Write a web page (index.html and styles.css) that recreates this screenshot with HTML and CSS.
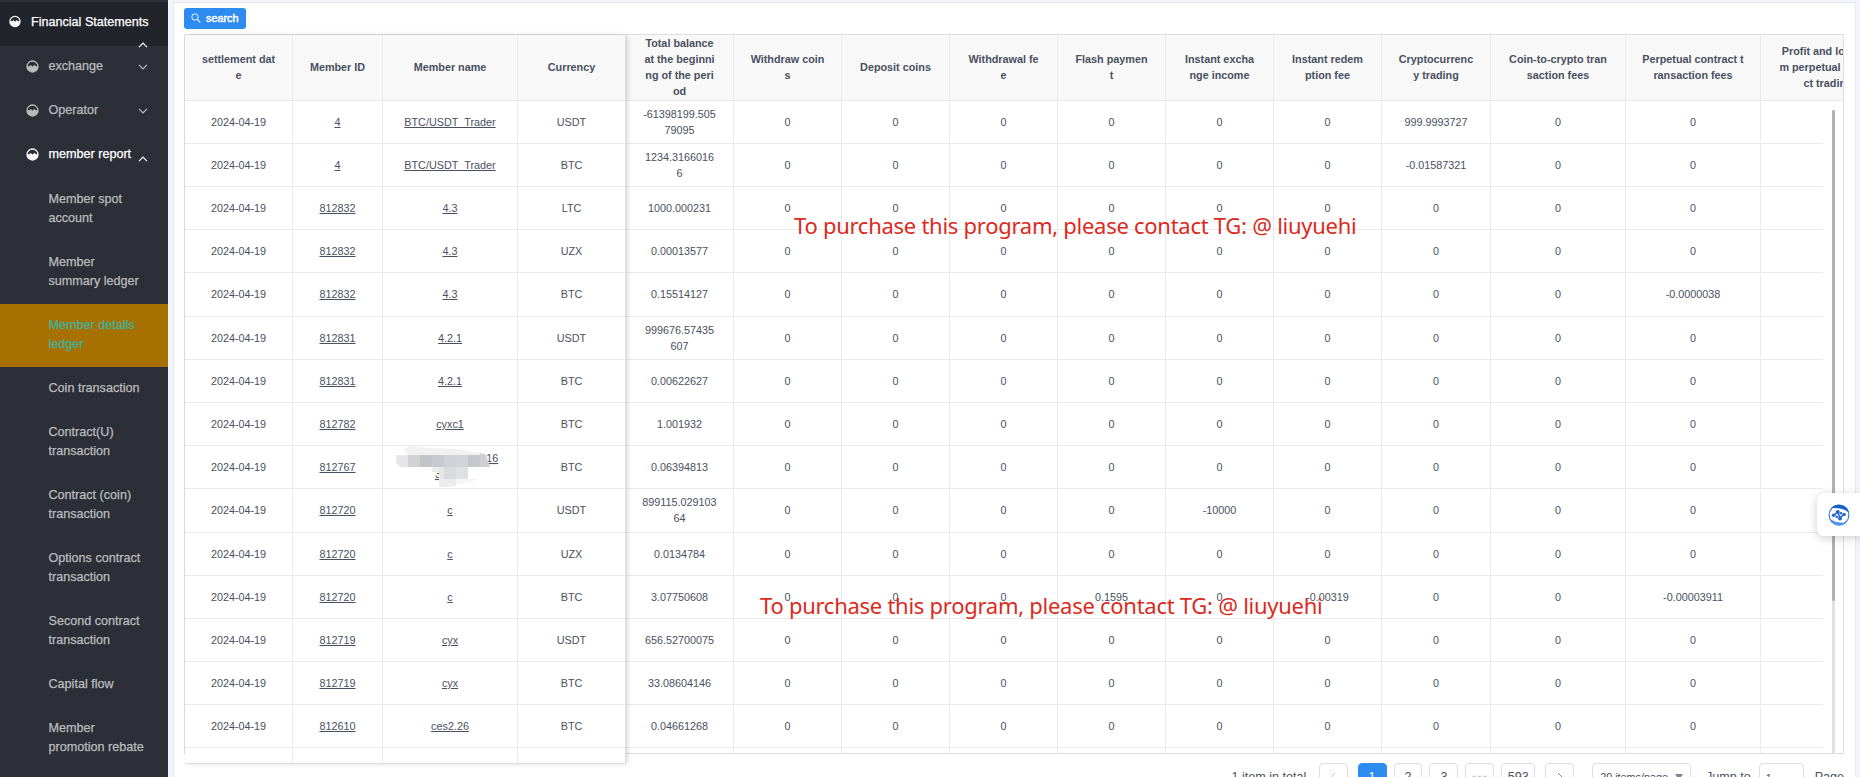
FILE: index.html
```html
<!DOCTYPE html>
<html lang="en">
<head>
<meta charset="utf-8">
<title>Member details ledger</title>
<link rel="stylesheet" href="styles.css">
</head>
<body>
<svg class="defs" width="0" height="0">
  <symbol id="gauge" viewBox="0 0 13 13">
    <circle cx="6.5" cy="6.5" r="5.5" fill="none" stroke="currentColor" stroke-width="1.3"/>
    <path d="M.9 6.2H3.4L4.8 5L6.6 6.8L8.4 4.8L9.8 6.2H12.1A5.6 5.6 0 0 1 .9 6.2Z" fill="currentColor"/>
  </symbol>
  <symbol id="down" viewBox="0 0 10 6"><path d="M1 .8L5 4.8L9 .8" fill="none" stroke="currentColor" stroke-width="1.2"/></symbol>
  <symbol id="up" viewBox="0 0 10 6"><path d="M1 5.2L5 1.2L9 5.2" fill="none" stroke="currentColor" stroke-width="1.2"/></symbol>
</svg>
<div class="app">
  <nav class="sidebar">
    <div class="root"><svg class="gauge"><use href="#gauge"/></svg><span>Financial Statements</span><svg class="chev root-chev"><use href="#up"/></svg></div>
    <div class="group"><svg class="gauge"><use href="#gauge"/></svg><span>exchange</span><svg class="chev"><use href="#down"/></svg></div>
    <div class="group"><svg class="gauge"><use href="#gauge"/></svg><span>Operator</span><svg class="chev"><use href="#down"/></svg></div>
    <div class="group open"><svg class="gauge"><use href="#gauge"/></svg><span>member report</span><svg class="chev"><use href="#up"/></svg></div>
    <a class="item">Member spot account</a>
    <a class="item">Member summary ledger</a>
    <a class="item active">Member details ledger</a>
    <a class="item">Coin transaction</a>
    <a class="item">Contract(U) transaction</a>
    <a class="item">Contract (coin) transaction</a>
    <a class="item">Options contract transaction</a>
    <a class="item">Second contract transaction</a>
    <a class="item">Capital flow</a>
    <a class="item">Member promotion rebate</a>
  </nav>
  <main class="card">
    <button class="search"><svg width="10" height="10" viewBox="0 0 11 11"><circle cx="4.4" cy="4.4" r="3.5" fill="none" stroke="currentColor"/><path d="M7 7L10.2 10.2" stroke="currentColor" stroke-width="1.2"/></svg><span>search</span></button>
    <section class="table">
      <div class="fixed" id="fixed"></div>
      <div class="scroll">
        <div id="head"></div>
        <div class="body">
          <div class="rows" id="rows"></div>
          <div class="track"><div class="thumb"></div></div>
        </div>
      </div>
    </section>
    <footer class="pager">
      <span class="total">1 item in total</span>
      <span class="btn prev"><svg width="6" height="10" viewBox="0 0 6 10"><path d="M5 1L1 5L5 9" fill="none" stroke="#c5c8ce"/></svg></span>
      <span class="btn on">1</span>
      <span class="btn">2</span>
      <span class="btn">3</span>
      <span class="btn"><svg width="15" height="5" viewBox="0 0 15 5" fill="#c5c8ce"><circle cx="2" cy="2.5" r="2"/><circle cx="7.5" cy="2.5" r="2"/><circle cx="13" cy="2.5" r="2"/></svg></span>
      <span class="btn wide">593</span>
      <span class="btn next"><svg width="6" height="10" viewBox="0 0 6 10"><path d="M1 1L5 5L1 9" fill="none" stroke="#808695"/></svg></span>
      <span class="select">20 items/page<i class="caret"></i></span>
      <span class="jump">Jump to</span>
      <span class="input">1</span>
      <span class="page">Page</span>
    </footer>
  </main>
</div>
<div class="notice first">To purchase this program, please contact TG: @ liuyuehi</div>
<div class="notice second">To purchase this program, please contact TG: @ liuyuehi</div>
<div class="widget">
  <svg width="22" height="22" viewBox="0 0 22 22">
    <circle cx="11" cy="11" r="9.9" fill="#fff" stroke="#3a7bdc" stroke-width="1.1"/>
    <path d="M3.2 4.2A10.5 10.5 0 0 1 21.2 9C18 5.6 11 3 3.2 4.2Z" fill="#1560cc"/>
    <path d="M.9 13.6A10.5 10.5 0 0 0 18.4 18.4C13 19.4 5 18.4 .9 13.6Z" fill="#4d93ee"/>
    <path d="M5.2 11.6L9.6 8L12 13.8L16.4 10.2" fill="none" stroke="#2468cc" stroke-width="1.6"/>
    <circle cx="5.6" cy="11.3" r="1.7" fill="#2468cc"/><circle cx="9.8" cy="7.9" r="2" fill="#2468cc"/><circle cx="12" cy="14.4" r="2" fill="#2468cc"/><circle cx="16.2" cy="10.4" r="1.7" fill="#2468cc"/><circle cx="13" cy="9.2" r="1.3" fill="#2468cc"/><circle cx="8.8" cy="12.8" r="1.3" fill="#2468cc"/>
  </svg>
</div>
<script src="script.js"></script>
</body>
</html>
```
FILE: styles.css
```css
* { box-sizing: border-box; }
body {
  margin: 0;
  width: 1860px;
  height: 777px;
  overflow: hidden;
  background: #f1f4fa;
  font-family: "Liberation Sans", Arial, sans-serif;
  font-size: 10.8px;
  line-height: 16px;
  color: #495060;
}
.defs { position: absolute; }
.app { display: flex; height: 777px; overflow: hidden; }

.sidebar {
  flex: none;
  width: 168px;
  height: 777px;
  padding-top: 2px;
  background: #2c2f38;
  color: #bbbcbf;
  font-size: 12.6px;
  line-height: 18.9px;
  -webkit-text-stroke: .25px;
}
.root, .group { display: flex; align-items: center; height: 44.1px; }
.root {
  position: relative;
  height: 43.7px;
  padding: 0 0 4px 9px;
  gap: 10px;
  background: #22242c;
  color: #fff;
}
.root span { padding-top: 1px; white-space: nowrap; }
.gauge { flex: none; width: 13px; height: 13px; }
.root .gauge { width: 12px; }
.group { padding: 0 20px 2px 26px; gap: 9.5px; }
.group span { flex: 1; white-space: nowrap; }
.open { color: #fff; }
.open span { margin-right: -10px; }
.chev { flex: none; width: 10px; height: 6px; }
.open .chev { position: relative; top: 4px; }
.root-chev { position: absolute; left: 138px; top: 40px; }
.item { display: block; padding: 11.8px 20px 13.4px 48.5px; }
.active { background: #a67100; color: #3db3a3; }

.card {
  flex: none;
  width: 1683px;
  margin: 2px 0 0 5px;
  padding: 5px 11px 0 10px;
  background: #fff;
  border: 1px solid #e6e8eb;
  border-bottom: 0;
}
.search {
  display: flex;
  align-items: center;
  gap: 5px;
  width: 62px;
  height: 21px;
  padding: 0 0 1px 7px;
  border: 0;
  border-radius: 3px;
  background: #2d8cf0;
  color: #fff;
  font: 10.8px/16px "Liberation Sans", Arial, sans-serif;
  -webkit-text-stroke: .45px;
}
.search svg { -webkit-text-stroke: 0; }
.table {
  display: flex;
  align-items: flex-start;
  width: 1660px;
  height: 720px;
  margin-top: 5px;
  border: 1px solid #dcdee2;
  border-bottom: 0;
}
.fixed {
  flex: none;
  position: relative;
  z-index: 1;
  width: 441px;
  height: 729px;
  overflow: hidden;
  background: #fff;
  border-bottom: 1px solid #dcdee2;
  box-shadow: 2px 0 5px -1px rgba(0, 0, 0, .2);
}
.fixed .row { grid-template-columns: 108px 90px 135px 108px; }
.scroll {
  flex: none;
  width: 1217px;
  height: 719px;
  overflow: hidden;
  border-bottom: 1px solid #dcdee2;
}
.scroll .row { width: 1351px; grid-template-columns: repeat(7, 108px) 109px 135px 135px 135px; }
.body { display: flex; height: 652px; }
.rows { flex: none; width: 1197px; overflow: hidden; }
.track { width: 3px; margin: 9px 0 0 9px; background: #e1e1e1; }
.thumb { height: 491px; border-radius: 2px; background: #b1b1b1; }

.row { display: grid; grid-template-rows: 100%; height: 43px; }
.row.tall { height: 44px; }
.row.head { height: 66px; background: #f8f8f9; font-weight: 700; }
.row > div {
  display: flex;
  align-items: center;
  justify-content: center;
  min-height: 0;
  text-align: center;
  white-space: nowrap;
  border-right: 1px solid #e8eaec;
  border-bottom: 1px solid #e8eaec;
}
.row.head > div { padding-bottom: 2px; }
.row.tall > div { padding-bottom: 1px; }
.fixed .row > div:last-child { border-right-color: #dcdee2; }
.link { text-decoration: underline; text-underline-offset: 1px; }
.mask-box { display: block; }

.pager {
  display: flex;
  align-items: center;
  height: 28px;
  margin-top: 9px;
  padding-left: 1047.5px;
  font-size: 12.6px;
  white-space: nowrap;
}
.total { width: 87.5px; }
.btn {
  display: flex;
  align-items: center;
  justify-content: center;
  width: 29px;
  height: 28px;
  margin-right: 7px;
  border: 1px solid #dcdee2;
  border-radius: 4px;
}
.prev { margin-right: 10px; }
.on { background: #2d8cf0; border-color: #2d8cf0; color: #fff; }
.wide { width: 34px; margin-right: 10px; }
.next { margin-right: 18px; }
.select {
  display: flex;
  align-items: center;
  justify-content: space-between;
  width: 99px;
  height: 28px;
  padding: 0 7px;
  margin-right: 15px;
  border: 1px solid #dcdee2;
  border-radius: 4px;
  font-size: 10.8px;
}
.caret { border: 4.5px solid transparent; border-top: 6px solid #808695; border-bottom: 0; }
.jump { width: 53px; }
.input {
  width: 45px;
  height: 28px;
  padding: 6px;
  margin-right: 11px;
  border: 1px solid #dcdee2;
  border-radius: 4px;
  font-size: 10.8px;
}

.notice {
  position: absolute;
  z-index: 2;
  color: #dc2a20;
  font: 22px/28px "Noto Sans", sans-serif;
  letter-spacing: -.27px;
  white-space: nowrap;
}
.first { left: 794px; top: 211px; }
.second { left: 760px; top: 591px; }
.widget {
  position: absolute;
  z-index: 3;
  left: 1817px;
  top: 493px;
  width: 43px;
  height: 43px;
  padding: 11px 0 0 11px;
  border-radius: 7px 0 0 7px;
  background: #fff;
  box-shadow: 0 2px 10px rgba(0, 0, 0, .2);
}
```
FILE: script.js
```js
const fixedHead = ["settlement dat<br>e", "Member ID", "Member name", "Currency"];
const heads = [
  "Total balance<br>at the beginni<br>ng of the peri<br>od", "Withdraw coin<br>s", "Deposit coins",
  "Withdrawal fe<br>e", "Flash paymen<br>t", "Instant excha<br>nge income", "Instant redem<br>ption fee",
  "Cryptocurrenc<br>y trading", "Coin-to-crypto tran<br>saction fees",
  "Perpetual contract t<br>ransaction fees", "Profit and loss fro<br>m perpetual contra<br>ct trading"
];
// id, name, currency, balance, { column index: value } for columns that are not 0
const data = [
  ["4", "BTC/USDT_Trader", "USDT", "-61398199.505<br>79095", { 7: "999.9993727" }],
  ["4", "BTC/USDT_Trader", "BTC", "1234.3166016<br>6", { 7: "-0.01587321" }],
  ["812832", "4.3", "LTC", "1000.000231", {}],
  ["812832", "4.3", "UZX", "0.00013577", {}],
  ["812832", "4.3", "BTC", "0.15514127", { 9: "-0.0000038" }],
  ["812831", "4.2.1", "USDT", "999676.57435<br>607", {}],
  ["812831", "4.2.1", "BTC", "0.00622627", {}],
  ["812782", "cyxc1", "BTC", "1.001932", {}],
  ["812767", null, "BTC", "0.06394813", {}],
  ["812720", "c", "USDT", "899115.029103<br>64", { 5: "-10000" }],
  ["812720", "c", "UZX", "0.0134784", {}],
  ["812720", "c", "BTC", "3.07750608", { 4: "0.1595", 6: "-0.00319", 9: "-0.00003911" }],
  ["812719", "cyx", "USDT", "656.52700075", {}],
  ["812719", "cyx", "BTC", "33.08604146", {}],
  ["812610", "ces2.26", "BTC", "0.04661268", {}]
];
// Pixelated block over a hidden member name; only its last characters stay visible
const maskedName = `<svg class="mask-box" width="108" height="42" viewBox="0 0 108 42">
<g font-size="10.8" fill="#495060" text-decoration="underline"><text x="85" y="16">116</text><text x="39" y="32">3</text></g>
<path d="M8 3L14 0L32 2L62 3L84 7L90 9H12Z" fill="#f1f1f2"/>
<path d="M0 9H12V21H4L0 16Z" fill="#e6e6e8"/><path d="M12 9H24V21H12Z" fill="#d2d2d4"/>
<path d="M24 9H36V21H24Z" fill="#c4c5cb"/><path d="M36 9H48V21H36Z" fill="#c9cad0"/>
<path d="M48 9H60V21H48Z" fill="#d0d2d6"/><path d="M60 9H72V21H60Z" fill="#d1d5d9"/>
<path d="M72 9H84V21H72Z" fill="#c6c8cc"/><path d="M84 7L90 9L94 21H84Z" fill="#cdcfd2"/>
<path d="M36 21H43V26H36Z" fill="#ececee"/><path d="M43 21H48V33H43Z" fill="#e6e6e9"/>
<path d="M48 21H60V33H48Z" fill="#dadbdd"/><path d="M60 21H72V33H60Z" fill="#dfe1e1"/>
<path d="M43 33H60V40L52 41H43Z" fill="#ececed"/><path d="M60 33H82L72 37L60 39Z" fill="#f6f6f6"/></svg>`;

const row = (cells, cls = "") => `<div class="row ${cls}">${cells.map(c => `<div>${c}</div>`).join("")}</div>`;
const span = t => `<span>${t}</span>`;
const link = t => `<span class="link">${t}</span>`;
const tall = i => (i === 4 || i === 9 ? "tall" : "");

document.getElementById("head").innerHTML = row(heads.map(span), "head");
document.getElementById("fixed").innerHTML = row(fixedHead.map(span), "head") +
  data.map((d, i) => row(["2024-04-19", link(d[0]), d[1] === null ? maskedName : link(d[1]), d[2]], tall(i))).join("") +
  row(["", "", "", ""]);
document.getElementById("rows").innerHTML =
  data.map((d, i) => row([span(d[3]), ...Array.from({ length: 10 }, (_, k) => d[4][k + 1] ?? "0")], tall(i))).join("") +
  row(Array(11).fill(""));
```
